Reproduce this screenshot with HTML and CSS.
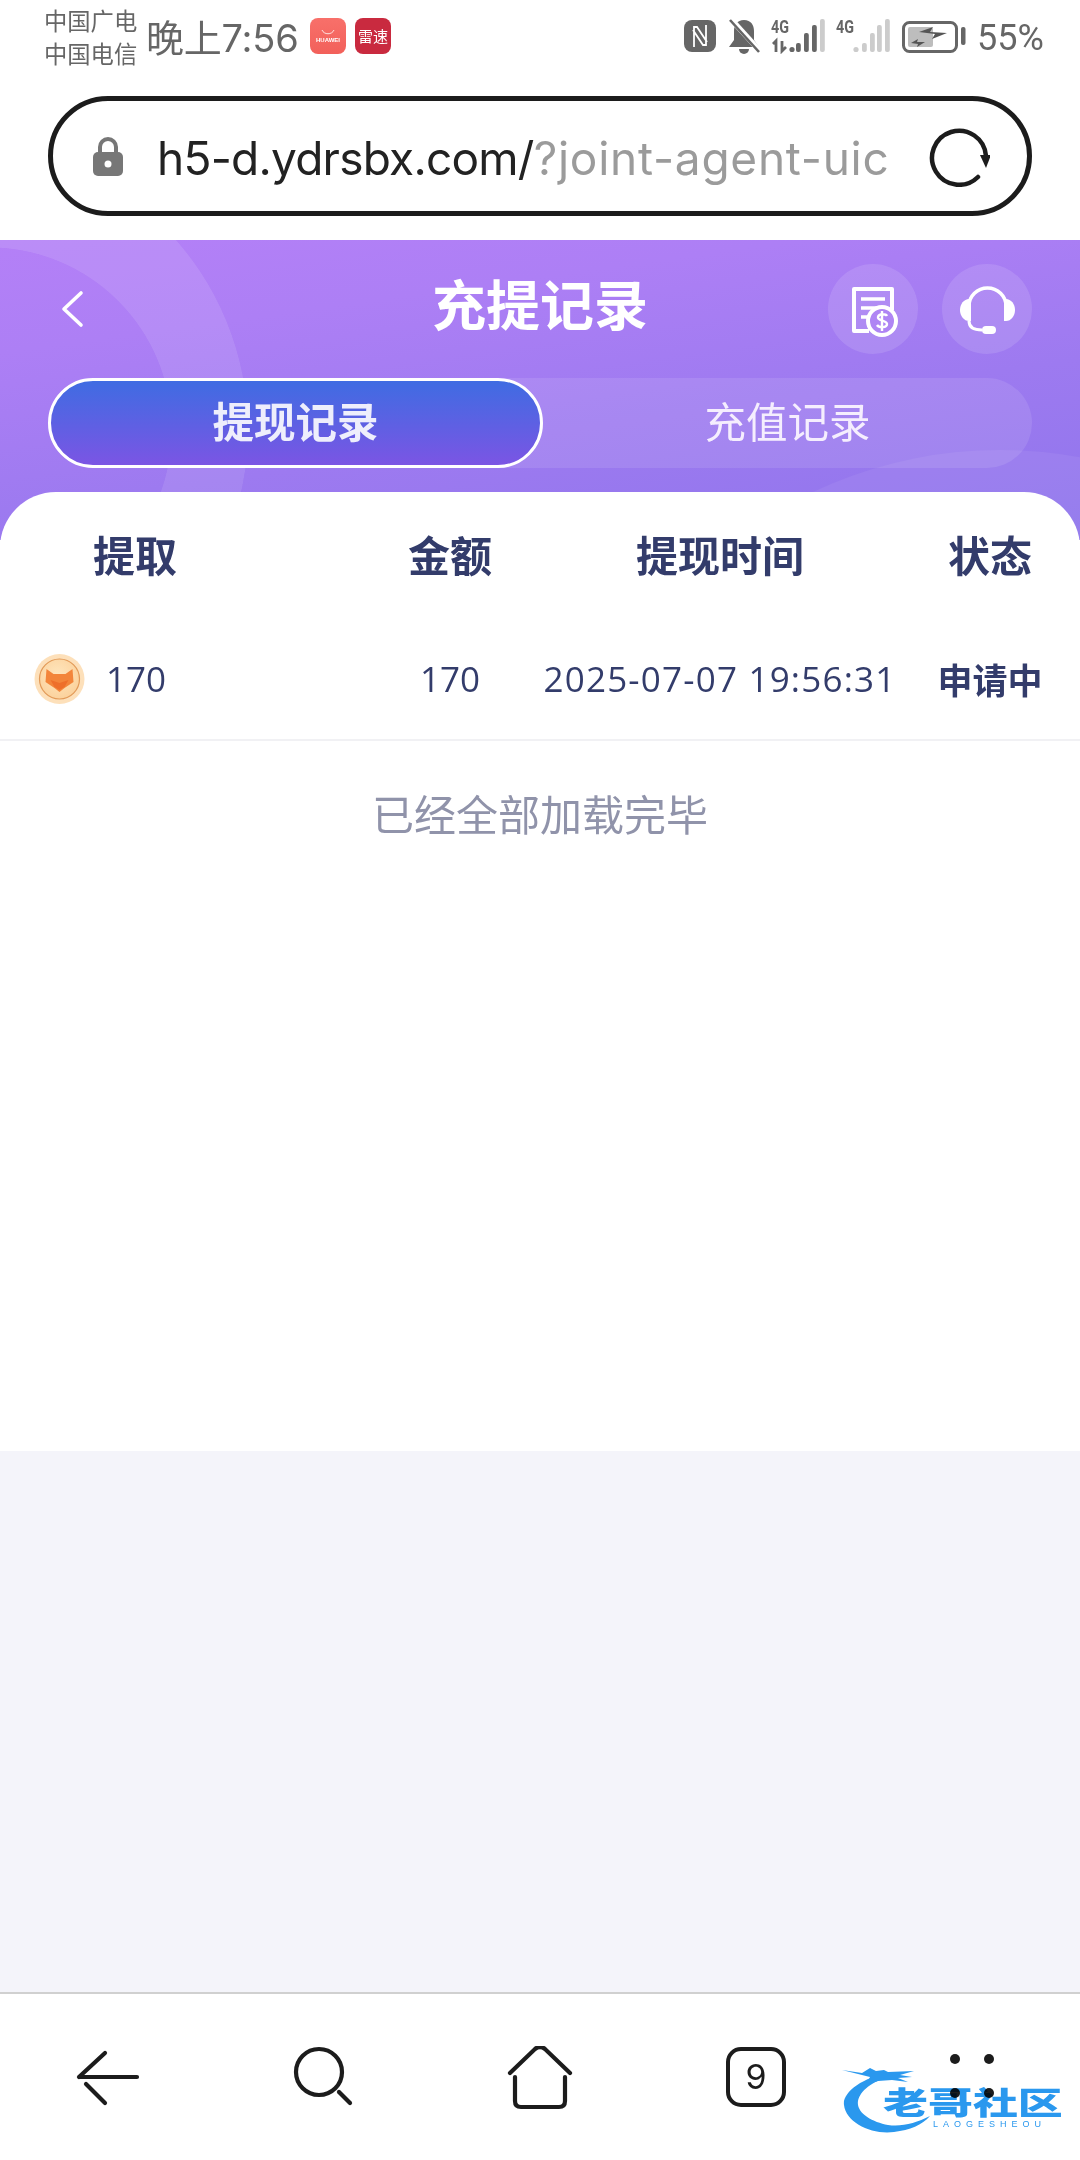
FILE: index.html
```html
<!DOCTYPE html>
<html lang="zh">
<head>
<meta charset="utf-8">
<title>充提记录</title>
<link rel="stylesheet" href="styles.css">
</head>
<body>
<div class="screen">
  <div class="status">
    <div class="carriers"><div>中国广电</div><div>中国电信</div></div>
    <div class="time">晚上7:56</div>
    <div class="app app-huawei"><svg class="app-bag" viewBox="0 0 16 6"><path d="M2 1c2 5 10 5 12 0" fill="none" stroke="#fff" stroke-opacity=".8" stroke-width="1"/></svg><span>HUAWEI</span></div>
    <div class="app app-leisu"><span>雷速</span></div>
    <div class="sys">
      <svg class="i-nfc" viewBox="0 -4 32 40"><rect y="2" width="32" height="32" rx="8" fill="#666"/><path d="M10 29V9h3l10 15M22 7v20h-3L9 12" fill="none" stroke="#fff" stroke-width="1.8"/></svg>
      <svg class="i-bell" viewBox="0 -4 32 40"><path d="M16 2c7 0 10 5 10 11v9l5 7H1l5-7v-9C6 7 9 2 16 2z" fill="#666"/><path d="M11 31h10a5 5 0 0 1-10 0z" fill="#666"/><path d="M2 0l29 32" stroke="#fff" stroke-width="5.5"/><path d="M2 2l29 32" stroke="#666" stroke-width="2.6"/></svg>
      <svg class="i-sig1" viewBox="0 -4 54 40">
        <text class="sig-text" x="0" y="15" textLength="18" lengthAdjust="spacingAndGlyphs">4G</text>
        <path d="M5 34v-11l-3 3M11 23v10l4-4" fill="none" stroke="#666" stroke-width="2.8"/>
        <circle cx="21" cy="31.5" r="2.6" fill="#666"/>
        <rect x="25" y="25" width="4.8" height="9" rx="2" fill="#666"/><rect x="33" y="15" width="4.8" height="19" rx="2" fill="#666"/><rect x="41" y="7" width="4.8" height="27" rx="2" fill="#666"/><rect x="49" y="1" width="4.8" height="33" rx="2" fill="#ccc"/>
      </svg>
      <svg class="i-sig2" viewBox="0 -4 54 40">
        <text class="sig-text" x="0" y="15" textLength="18" lengthAdjust="spacingAndGlyphs">4G</text>
        <circle cx="20" cy="31.5" r="2.6" fill="#ccc"/>
        <rect x="26" y="25" width="4.8" height="9" rx="2" fill="#ccc"/><rect x="34" y="15" width="4.8" height="19" rx="2" fill="#ccc"/><rect x="41" y="7" width="4.8" height="27" rx="2" fill="#ccc"/><rect x="49" y="1" width="4.8" height="33" rx="2" fill="#ccc"/>
      </svg>
      <svg class="i-bat" viewBox="0 -4 64 40"><rect x="1.5" y="4.5" width="53" height="29" rx="6" fill="none" stroke="#666" stroke-width="3"/><rect x="6" y="9" width="25" height="20" rx="2" fill="#bdbdbd"/><path d="M17 14l14-5-3 5 17 1-15 6 3-5z" fill="#555"/><path d="M9 25l7-4-1 3 8 0-8 5 1-3z" fill="#555"/><rect x="59" y="9" width="4.5" height="18" rx="2" fill="#666"/></svg>
      <span class="pct">55%</span>
    </div>
  </div>

  <div class="urlwrap">
    <div class="urlbar">
      <svg class="i-lock" viewBox="0 0 30 39"><path d="M7 17V10a8 8 0 0 1 16 0v7" fill="none" stroke="#777" stroke-width="4"/><rect y="15" width="30" height="24" rx="5" fill="#777"/><circle cx="15" cy="27" r="3.5" fill="#fff"/></svg>
      <div class="url"><span class="url-host">h5-d.ydrsbx.com/</span><span class="url-rest">?joint-agent-uic</span></div>
      <svg class="i-reload" viewBox="0 0 62 62"><path d="M50 52A27 27 0 1 1 58 31" fill="none" stroke="#1c1c1c" stroke-width="4.5" stroke-linecap="round"/><path d="M52 30h11l-5 13z" fill="#1c1c1c"/></svg>
    </div>
  </div>

  <div class="hero">
    <div class="decor decor-ring"></div>
    <div class="decor decor-wave"></div>
    <div class="topbar">
      <svg class="i-back" viewBox="0 0 24 38"><path d="M21 3L4 19l17 16" fill="none" stroke="#fff" stroke-width="3.6" stroke-linecap="round" stroke-linejoin="round"/></svg>
      <h1 class="title">充提记录</h1>
      <div class="round-btns">
        <div class="round">
          <svg viewBox="0 0 90 90"><path d="M41 67H26V25h38v21" fill="none" stroke="#fff" stroke-width="4" stroke-linejoin="round"/><path d="M33 35h24M33 44h16M33 53h6" stroke="#fff" stroke-width="3.5" fill="none"/><circle cx="54" cy="57" r="14" fill="#af85f4" stroke="#fff" stroke-width="4"/><path d="M59 52c-1-2-8-3-9 1s9 3 9 7-8 4-10 1M54 47v20" fill="none" stroke="#fff" stroke-width="2.4"/></svg>
        </div>
        <div class="round">
          <svg viewBox="0 0 90 90"><path d="M27 44V42a18.500 18 0 0 1 37 0v2" fill="none" stroke="#fff" stroke-width="3.6"/><path d="M29 35v22h-2c-5 0-9-5-9-11s4-11 9-11z" fill="#fff"/><path d="M62 35v22h2c5 0 9-5 9-11s-4-11-9-11z" fill="#fff"/><path d="M27 57c0 6 5 9 13 9" fill="none" stroke="#fff" stroke-width="3"/><rect x="40" y="62" width="14" height="8" rx="4" fill="#fff"/></svg>
        </div>
      </div>
    </div>
    <div class="tabs">
      <div class="tab tab-on">提现记录</div>
      <div class="tab">充值记录</div>
    </div>
  </div>

  <div class="card">
    <div class="grid thead">
      <div class="c-first">提取</div><div>金额</div><div>提现时间</div><div>状态</div>
    </div>
    <div class="grid trow">
      <div class="c-coin">
        <svg class="coin" viewBox="0 0 50 50"><defs><radialGradient id="cg" cx=".45" cy=".4" r=".65"><stop offset="0" stop-color="#ffe6bd"/><stop offset="1" stop-color="#fbd09a"/></radialGradient></defs><circle cx="25" cy="25" r="25" fill="#fde0ba"/><circle cx="25" cy="25" r="20" fill="url(#cg)" stroke="#e29a58" stroke-width="1.2"/><path d="M12 15l7 5h12l7-5 1 13-9 6-5 4-5-4-9-6z" fill="#f3853a"/><path d="M16 26l9 3 9-3-4 7-5 3-5-3z" fill="#ee6f2a"/></svg>
        <span>170</span>
      </div>
      <div>170</div>
      <div class="c-date">2025-07-07 19:56:31</div>
      <div class="c-state">申请中</div>
    </div>
    <div class="done">已经全部加载完毕</div>
  </div>

  <div class="gap"></div>

  <nav class="nav">
    <svg class="nav-i" viewBox="0 0 90 70"><path d="M16 31L42 7M16 31H74M23 38L42 57" fill="none" stroke="#1c1c1c" stroke-width="4.2" stroke-linecap="round"/></svg>
    <svg class="nav-i" viewBox="0 0 90 70"><circle cx="40" cy="26" r="23" fill="none" stroke="#1c1c1c" stroke-width="4.2"/><path d="M60 46l11 11" stroke="#1c1c1c" stroke-width="4.2" stroke-linecap="round"/></svg>
    <svg class="nav-i" viewBox="0 0 90 70"><path d="M15 27L40 3q5-4 10 0L75 27" fill="none" stroke="#1c1c1c" stroke-width="4.2" stroke-linecap="round"/><path d="M20 31v24q0 6 6 6h38q6 0 6-6V31" fill="none" stroke="#1c1c1c" stroke-width="4.2" stroke-linecap="round"/></svg>
    <div class="tabcount"><span>9</span></div>
    <svg class="nav-i" viewBox="0 0 90 70"><circle cx="28" cy="13" r="5" fill="#1c1c1c"/><circle cx="62" cy="13" r="5" fill="#1c1c1c"/><circle cx="28" cy="47" r="5" fill="#1c1c1c"/><circle cx="62" cy="47" r="5" fill="#1c1c1c"/></svg>
    <div class="mark">
      <svg class="mark-dragon" viewBox="0 0 221 68"><path d="M48 8C20 12 0 28 2 40C4 58 30 70 52 67C68 65 80 60 88 51C74 58 60 62 46 60C30 57 14 48 16 36C18 26 30 16 48 12Z" fill="#2a98ee"/><path d="M0 5l20 3 8-5 6 3 8-1 4 2 26-1-14 4 12 2-14 1 10 4-16-2-14 1-12 4 4-8-12-3z" fill="#2a98ee"/></svg>
      <span class="mark-cn">老哥社区</span>
      <span class="mark-en">LAOGESHEOU</span>
    </div>
  </nav>
</div>
</body>
</html>
```

FILE: styles.css
```css
* { box-sizing: border-box; }
html, body { margin: 0; padding: 0; }
body { background: #fff; font-family: "Noto Sans CJK SC", "Noto Sans", sans-serif; }
.screen { width: 1080px; height: 2160px; display: flex; flex-direction: column; overflow: hidden; }

/* status bar */
.status { height: 76px; display: flex; align-items: flex-start; padding-left: 44px; color: #666; flex: none; }
.carriers { font-size: 23.300px; line-height: 33px; padding-top: 4px; width: 102px; }
.time { font-family: "Inter", "Noto Sans CJK SC", sans-serif; font-size: 38px; line-height: 66px; padding-top: 5px; width: 164px; letter-spacing: -.2px; white-space: nowrap; }
.app { width: 36px; height: 36px; margin-top: 18px; border-radius: 8px; display: flex; flex-direction: column; align-items: center; justify-content: center; color: #fff; }
.app-huawei { background: linear-gradient(180deg, #f8706a, #f2605a); margin-right: 9px; }
.app-bag { width: 16px; height: 6px; margin-bottom: 2px; }
.app-huawei span { font-family: "Liberation Sans", sans-serif; font-size: 6px; font-weight: 700; line-height: 7px; }
.app-leisu { background: #c92a3f; }
.app-leisu span { font-size: 15px; line-height: 18px; white-space: nowrap; }
.sys { margin-left: auto; margin-top: 14px; height: 40px; display: flex; align-items: flex-start; padding-right: 37px; }
.sys svg { height: 40px; display: block; flex: none; }
.i-nfc { width: 32px; margin-right: 12px; }
.i-bell { width: 32px; margin-right: 11px; }
.i-sig1 { width: 54px; margin-right: 11px; }
.i-sig2 { width: 54px; margin-right: 12px; }
.i-bat { width: 64px; margin-right: 11px; }
.sig-text { font-family: "Roboto", sans-serif; font-size: 19px; font-weight: 700; fill: #666; }
.pct { font-family: "Roboto", sans-serif; font-size: 36px; line-height: 48px; color: #666; width: 66px; flex: none; white-space: nowrap; }

/* url bar */
.urlwrap { height: 164px; padding: 20px 48px 0; flex: none; }
.urlbar { height: 120px; border: 5px solid #1c1c1c; border-radius: 60px; display: flex; align-items: center; padding-left: 40px; }
.i-lock { width: 30px; height: 39px; flex: none; margin-right: 34px; }
.url { width: 731px; white-space: nowrap; font-family: "Inter", sans-serif; font-size: 46px; line-height: 60px; padding-top: 3px; flex: none; }
.url-host { color: #222; letter-spacing: -.75px; }
.url-rest { color: #9b9b9b; letter-spacing: .75px; }
.i-reload { width: 62px; height: 62px; margin-left: 40px; flex: none; }

/* hero */
.hero { position: relative; height: 300px; flex: none; overflow: hidden; background: linear-gradient(172deg, #b480f7 0%, #ad7ff5 25%, #9d7af0 60%, #8f75ec 100%); }
.decor { position: absolute; border-radius: 50%; pointer-events: none; }
.decor-ring { left: -326px; top: -97px; width: 574px; height: 574px; background: radial-gradient(circle 183px at 315px 287px, transparent 99.6%, rgba(255,255,255,.1) 100%); -webkit-mask-image: linear-gradient(180deg, #000 55%, rgba(0,0,0,.3) 100%); mask-image: linear-gradient(180deg, #000 55%, rgba(0,0,0,.3) 100%); }
.decor-wave { left: 561px; top: 210px; width: 878px; height: 878px; background: rgba(255,255,255,.06); }
.topbar { position: relative; display: flex; align-items: center; height: 91px; margin-top: 23px; padding: 0 48px 0 60px; }
.i-back { width: 24px; height: 38px; flex: none; }
.title { position: absolute; left: 0; right: 0; top: 5px; margin: 0; text-align: center; font-size: 54px; line-height: 70px; font-weight: 700; color: #fff; }
.round-btns { margin-left: auto; display: flex; gap: 24px; }
.round { width: 90px; height: 90px; border-radius: 50%; background: rgba(255,255,255,.12); }
.round svg { width: 90px; height: 90px; display: block; }
.tabs { position: relative; display: flex; margin: 24px 48px 0; height: 90px; border-radius: 45px; background: rgba(255,255,255,.1); }
.tab { flex: 1 1 50%; display: flex; align-items: center; justify-content: center; font-size: 41.500px; color: #f5eefe; border-radius: 45px; padding-bottom: 6px; }
.tab-on { flex: 0 0 495px; background: linear-gradient(180deg, #3f6ce2, #7b55e4); border: 3px solid #fff; font-weight: 700; color: #eeeefc; }

/* card */
.card { position: relative; height: 959px; margin-top: -48px; flex: none; background: #fff; border-radius: 56px 56px 0 0; }
.grid { display: grid; grid-template-columns: 360px 180px 360px 180px; text-align: center; }
.thead { padding-top: 29px; height: 130px; font-size: 42px; line-height: 66px; font-weight: 700; color: #333c6b; }
.c-first { text-align: left; padding-left: 93px; }
.trow { height: 119px; border-bottom: 2px solid #f1f1f4; align-items: center; font-family: "Open Sans", sans-serif; font-size: 35px; color: #333c6b; padding-bottom: 4px; }
.c-coin { display: flex; align-items: center; padding-left: 34px; }
.coin { width: 51px; height: 50px; margin-right: 21px; flex: none; }
.c-date { letter-spacing: 1.2px; white-space: nowrap; }
.c-state { font-family: "Noto Sans CJK SC", sans-serif; font-weight: 700; font-size: 35px; }
.done { margin-top: 45px; text-align: center; font-size: 42px; line-height: 54px; color: #9093aa; }

.gap { flex: 1 1 auto; background: #f4f4fa; }

/* bottom nav */
.nav { position: relative; height: 168px; flex: none; display: grid; grid-template-columns: repeat(5, 216px); justify-items: center; padding-top: 52px; background: #fff; border-top: 2px solid #d0d0d0; align-items: start; }
.nav-i { width: 90px; height: 70px; display: block; }
.tabcount { width: 60px; height: 60px; margin-top: 1px; border: 4.2px solid #1c1c1c; border-radius: 15px; display: flex; align-items: center; justify-content: center; font-family: "Inter", sans-serif; font-size: 34px; line-height: 1; color: #1c1c1c; }
.mark { position: absolute; left: 842px; top: 71px; width: 221px; height: 68px; color: #2a98ee; mix-blend-mode: multiply; }
.mark-dragon { position: absolute; left: 0; top: 0; width: 221px; height: 68px; }
.mark-cn { position: absolute; left: 41px; top: 20px; width: 124px; font-size: 31px; line-height: 32px; font-weight: 900; white-space: nowrap; transform: scaleX(1.45); transform-origin: left center; }
.mark-en { position: absolute; left: 91px; top: 53px; font-family: "Liberation Sans", sans-serif; font-size: 9px; line-height: 12px; letter-spacing: 5px; white-space: nowrap; }
```
